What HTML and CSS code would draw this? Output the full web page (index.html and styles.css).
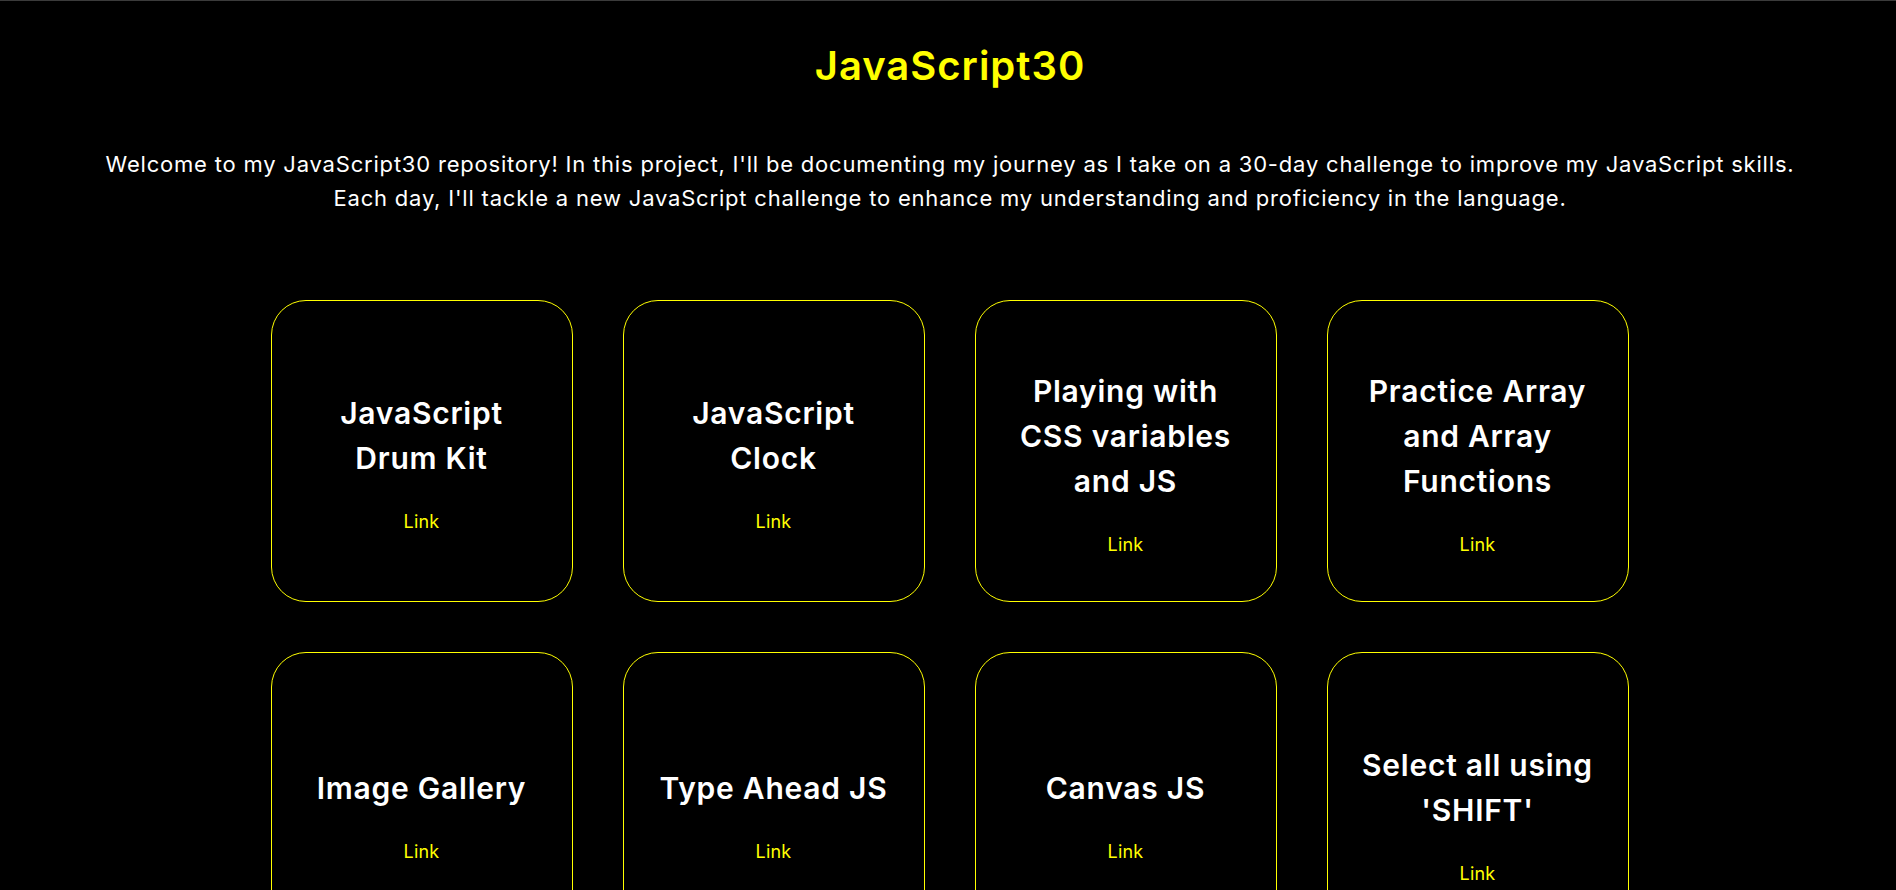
FILE: index.html
```html
<!DOCTYPE html>
<html lang="en">
<head>
<meta charset="utf-8">
<title>JavaScript30</title>
<link rel="stylesheet" href="styles.css">
</head>
<body>
<header class="intro">
  <h1 class="title">JavaScript30</h1>
  <p class="lead">Welcome to my JavaScript30 repository! In this project, I'll be documenting my journey as I take on a 30-day challenge to improve my JavaScript skills.<br>Each day, I'll tackle a new JavaScript challenge to enhance my understanding and proficiency in the language.</p>
</header>
<main class="grid">
  <div class="card"><h2 class="card-title">JavaScript Drum Kit</h2><a class="card-link" href="#">Link</a></div>
  <div class="card"><h2 class="card-title">JavaScript Clock</h2><a class="card-link" href="#">Link</a></div>
  <div class="card"><h2 class="card-title">Playing with CSS variables and JS</h2><a class="card-link" href="#">Link</a></div>
  <div class="card"><h2 class="card-title">Practice Array and Array Functions</h2><a class="card-link" href="#">Link</a></div>
  <div class="card"><h2 class="card-title">Image Gallery</h2><a class="card-link" href="#">Link</a></div>
  <div class="card"><h2 class="card-title">Type Ahead JS</h2><a class="card-link" href="#">Link</a></div>
  <div class="card"><h2 class="card-title">Canvas JS</h2><a class="card-link" href="#">Link</a></div>
  <div class="card"><h2 class="card-title">Select all using 'SHIFT'</h2><a class="card-link" href="#">Link</a></div>
</main>
</body>
</html>
```
FILE: styles.css
```css
* { box-sizing: border-box; }

html, body {
  background: #000;
}

body {
  margin: 0;
  border-top: 1px solid #3b3b3b;
  color: #fff;
  font-family: Inter, "Noto Sans", sans-serif;
}

.intro {
  text-align: center;
  padding: 35px 0 0 4px;
}

.title {
  margin: 0;
  color: #ffff00;
  font-size: 40px;
  line-height: 60px;
  font-weight: 600;
  letter-spacing: 1px;
}

.lead {
  margin: 51px 0 0;
  font-size: 22px;
  line-height: 34px;
  font-weight: 400;
  letter-spacing: 0.8px;
}

.grid {
  display: grid;
  grid-template-columns: repeat(4, 302px);
  justify-content: center;
  gap: 50px;
  margin-top: 85px;
  padding-left: 3px;
  padding-bottom: 50px;
}

.card {
  width: 302px;
  height: 302px;
  border: 1px solid #ffff00;
  border-radius: 35px;
  padding: 24px 30px 0;
  display: flex;
  flex-direction: column;
  align-items: center;
  justify-content: center;
  text-align: center;
  gap: 27px;
}

.card-title {
  margin: 0;
  font-size: 30px;
  line-height: 45px;
  font-weight: 600;
  letter-spacing: 0.75px;
  color: #fff;
}

.card-link {
  color: #ffff00;
  text-decoration: none;
  font-size: 18px;
  line-height: 27px;
  font-weight: 400;
  letter-spacing: 0.2px;
}
```
